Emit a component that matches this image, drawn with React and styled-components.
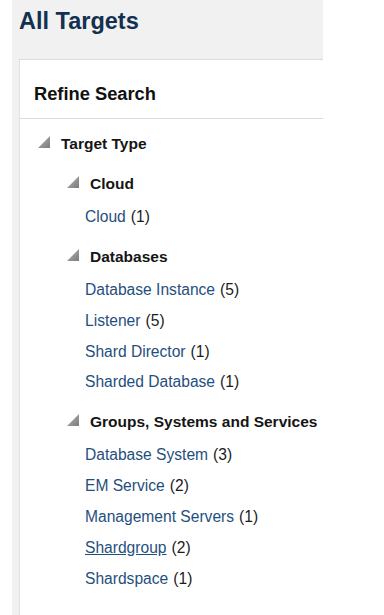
import React from 'react'
import styled, { createGlobalStyle } from 'styled-components'

const sections = [
  {
    title: 'Cloud',
    items: [{ label: 'Cloud', count: 1 }],
  },
  {
    title: 'Databases',
    items: [
      { label: 'Database Instance', count: 5 },
      { label: 'Listener', count: 5 },
      { label: 'Shard Director', count: 1 },
      { label: 'Sharded Database', count: 1 },
    ],
  },
  {
    title: 'Groups, Systems and Services',
    items: [
      { label: 'Database System', count: 3 },
      { label: 'EM Service', count: 2 },
      { label: 'Management Servers', count: 1 },
      { label: 'Shardgroup', count: 2, hover: true },
      { label: 'Shardspace', count: 1 },
    ],
  },
]

const Triangle = () => (
  <Tri viewBox="0 0 14 14" aria-hidden="true">
    <defs>
      <linearGradient id="triGrad" x1="0" y1="0" x2="1" y2="1">
        <stop offset="0" stopColor="#b4b4b4" />
        <stop offset="1" stopColor="#7c7c7c" />
      </linearGradient>
    </defs>
    <polygon points="13,1 13,13 1,13" fill="url(#triGrad)" />
  </Tri>
)

const App = () => {
  return (
    <>
      <GlobalStyle />
      <Page>
        <Shell>
          <Title>All Targets</Title>
          <Panel>
            <PanelHeader>Refine Search</PanelHeader>
            <Tree>
              <Heading $level={0}>
                <Triangle />
                <span>Target Type</span>
              </Heading>
              {sections.map((s) => (
                <Section key={s.title}>
                  <Heading $level={1}>
                    <Triangle />
                    <span>{s.title}</span>
                  </Heading>
                  <List>
                    {s.items.map((it) => (
                      <Item key={it.label}>
                        <Link $hover={it.hover}>{it.label}</Link>
                        <Count>({it.count})</Count>
                      </Item>
                    ))}
                  </List>
                </Section>
              ))}
            </Tree>
          </Panel>
        </Shell>
      </Page>
    </>
  )
}

export default App

const GlobalStyle = createGlobalStyle`
  html, body {
    margin: 0;
    padding: 0;
    background: #ffffff;
    font-family: "Liberation Sans", Arial, Helvetica, sans-serif;
  }
`

const Page = styled.div`
  width: 384px;
  height: 615px;
  overflow: hidden;
  background: #ffffff;
`

const Shell = styled.div`
  margin-left: 12px;
  width: 311px;
  min-height: 615px;
  background: #f1f1f1;
  display: flex;
  flex-direction: column;
`

const Title = styled.h1`
  flex: none;
  margin: 0;
  height: 59px;
  padding: 8px 0 0 7px;
  box-sizing: border-box;
  font-size: 23.5px;
  font-weight: bold;
  color: #143050;
`

const Panel = styled.div`
  flex: 1;
  margin-left: 7px;
  background: #ffffff;
  border-left: 1px solid #dde2e7;
  border-top: 1px solid #d5dce3;
`

const PanelHeader = styled.div`
  height: 59px;
  box-sizing: border-box;
  padding: 23px 0 0 14px;
  border-bottom: 1px solid #d5dce3;
  font-size: 18.3px;
  font-weight: bold;
  color: #111111;
`

const Tree = styled.div`
  display: flex;
  flex-direction: column;
  padding-top: 16px;
`

const Section = styled.div`
  display: flex;
  flex-direction: column;
  margin-top: 22px;
`

const Heading = styled.div`
  display: flex;
  align-items: center;
  gap: 10px;
  padding-left: ${(p) => (p.$level === 0 ? '17px' : '46px')};
  height: 18px;
  font-size: 15.5px;
  font-weight: bold;
  color: #151515;
`

const Tri = styled.svg`
  width: 14px;
  height: 14px;
  flex: none;
  margin-top: -4px;
`

const List = styled.ul`
  list-style: none;
  margin: 15px 0 0 0;
  padding: 0 0 0 65px;
  display: flex;
  flex-direction: column;
  gap: 12.8px;
`

const Item = styled.li`
  display: flex;
  align-items: baseline;
  gap: 5px;
  height: 18px;
  font-size: 15.6px;
`

const Link = styled.a`
  color: #1f4f7e;
  text-decoration: ${(p) => (p.$hover ? 'underline' : 'none')};
  cursor: pointer;
`

const Count = styled.span`
  color: #1c1c1c;
`
